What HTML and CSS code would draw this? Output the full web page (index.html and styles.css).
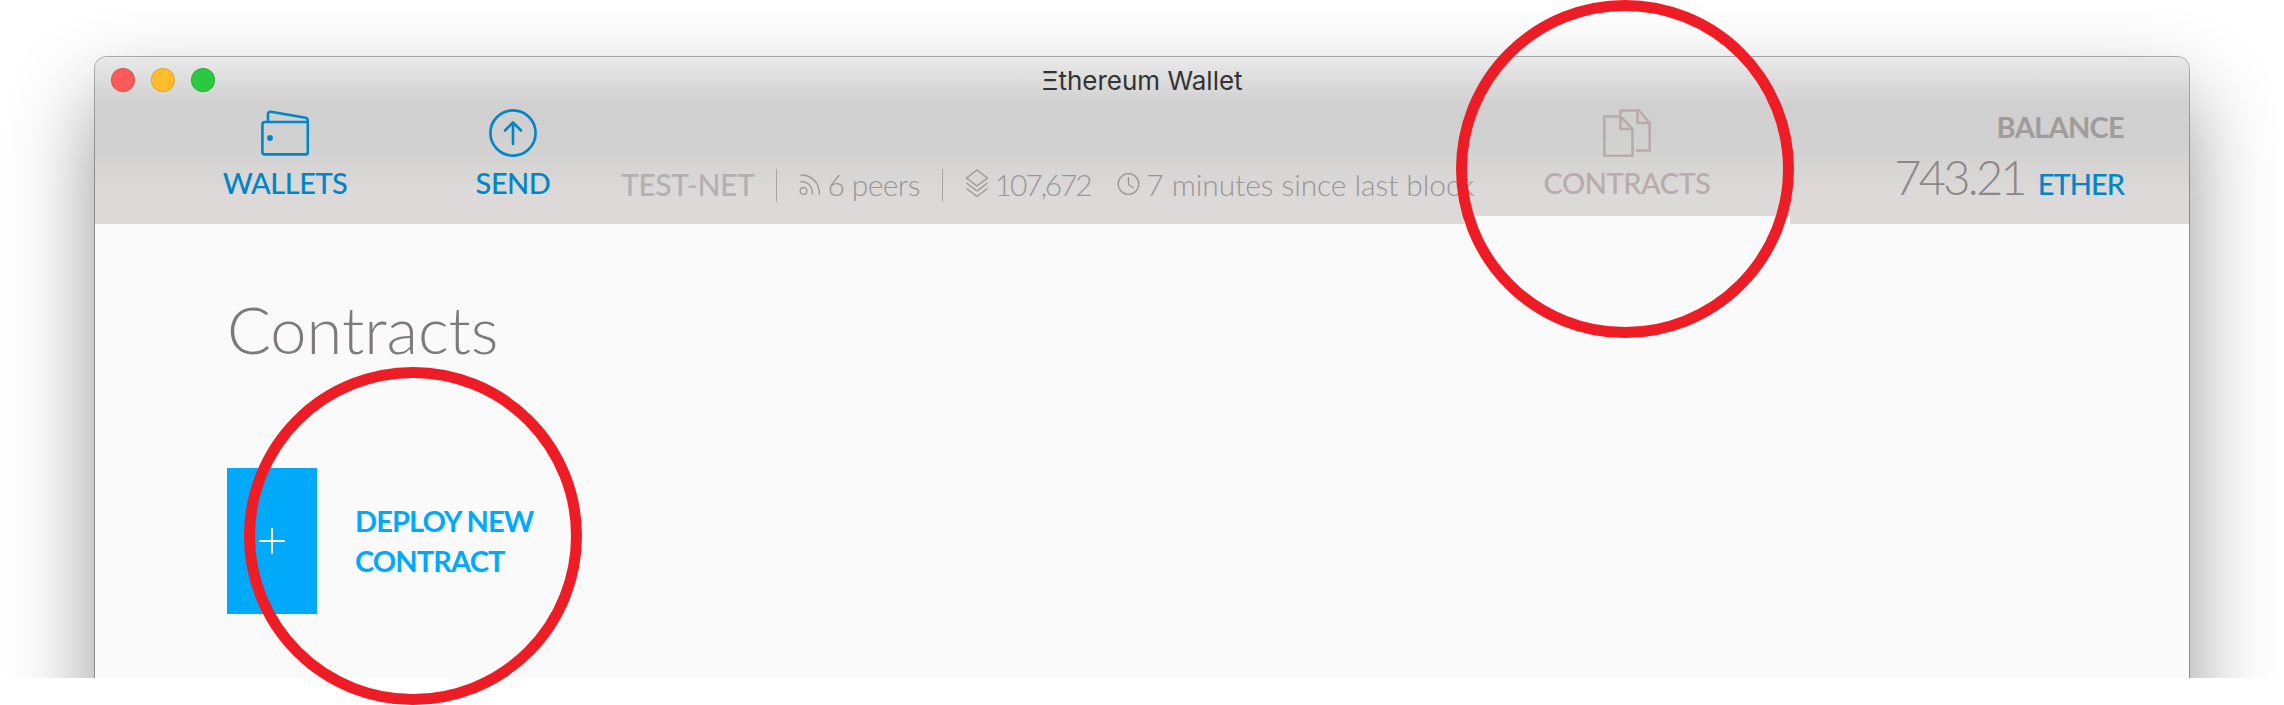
FILE: index.html
```html
<!DOCTYPE html>
<html lang="en">
<head>
    <meta charset="UTF-8">
    <title>Ethereum Wallet - Contracts</title>
    <link rel="stylesheet" href="styles.css">
</head>
<body>
    <div class="stage">
        <div class="window">
            <header class="chrome">
                <div class="titlebar">
                    <div class="lights">
                        <span class="light light-red"></span>
                        <span class="light light-yellow"></span>
                        <span class="light light-green"></span>
                    </div>
                    <div class="title">Ξthereum Wallet</div>
                </div>
                <nav class="nav">
                    <a class="tab">
                        <svg class="tab-icon" width="48" height="48" viewBox="0 0 48 48" fill="none" stroke="currentColor" stroke-width="2.6" stroke-linejoin="round">
                            <path d="M7 13V5.5C7 3.5 8.3 2.5 10 2.8L44.5 8.8C46 9.2 46.8 10 46.8 11.5V43C46.8 44.6 46 45.4 44.5 45.4H3.8C2.2 45.4 1.4 44.6 1.4 43V15.5C1.4 14 2.2 13 3.8 13H46"/>
                            <circle cx="9" cy="29" r="2.9" fill="currentColor" stroke="none"/>
                        </svg>
                        <span>WALLETS</span>
                    </a>
                    <a class="tab">
                        <svg class="tab-icon" width="48" height="48" viewBox="0 0 48 48" fill="none" stroke="currentColor" stroke-width="2.6" stroke-linecap="round" stroke-linejoin="round">
                            <circle cx="24" cy="24" r="22.6"/>
                            <path d="M24 35V14M16 21.5L24 13.5L32 21.5"/>
                        </svg>
                        <span>SEND</span>
                    </a>
                    <div class="status">
                        <span class="status-net">TEST-NET</span>
                        <span class="status-sep"></span>
                        <span class="status-item status-peers">
                            <svg width="22" height="24" viewBox="0 0 22 24" fill="none" stroke="currentColor" stroke-width="1.3">
                                <circle cx="4.5" cy="19" r="3.4"/>
                                <path d="M1.5 9.5C9 9.5 13.5 14 13.5 22.5M1.5 3C12.5 3 20.5 10.5 20.5 22.5"/>
                            </svg>
                            6 peers
                        </span>
                        <span class="status-sep"></span>
                        <span class="status-item status-count">
                            <svg width="24" height="32" viewBox="0 0 24 32" fill="none" stroke="currentColor" stroke-width="1.3" stroke-linejoin="round">
                                <path d="M12 2L22.5 10L12 18L1.5 10Z"/>
                                <path d="M1.5 15L12 23L22.5 15M1.5 20.5L12 28.5L22.5 20.5"/>
                            </svg>
                            107,672
                        </span>
                        <span class="status-item status-last">
                            <svg width="23" height="24" viewBox="0 0 23 24" fill="none" stroke="currentColor" stroke-width="1.3">
                                <circle cx="11.5" cy="12" r="10.3"/>
                                <path d="M11.5 5V12.5L16.5 16"/>
                            </svg>
                            7 minutes since last block
                        </span>
                    </div>
                    <a class="tab tab-active">
                        <svg class="tab-icon" width="48" height="48" viewBox="0 0 48 48" fill="none" stroke="currentColor" stroke-width="2.6" stroke-linejoin="round">
                            <path d="M17.5 6V1.5H36L46.7 14V41.5H33"/>
                            <path d="M34.5 1.5V14H46.7"/>
                            <path d="M1.3 7.5H17.5L29.5 20V46.7H1.3Z"/>
                            <path d="M17.5 7.5V20H29.5"/>
                        </svg>
                        <span>CONTRACTS</span>
                    </a>
                    <div class="balance">
                        <div class="balance-label">BALANCE</div>
                        <div class="balance-value"><span class="balance-amount">743.21</span><span class="balance-unit">ETHER</span></div>
                    </div>
                </nav>
            </header>
            <main class="content">
                <h1 class="page-title">Contracts</h1>
                <a class="deploy">
                    <span class="deploy-plus">
                        <svg width="26" height="26" viewBox="0 0 26 26" stroke="#fff" stroke-width="2">
                            <path d="M13 0V26M0 13H26"/>
                        </svg>
                    </span>
                    <span class="deploy-text">DEPLOY NEW<br>CONTRACT</span>
                </a>
            </main>
        </div>
    </div>

    <div class="ring ring-tab"></div>
    <div class="ring ring-deploy"></div>
</body>
</html>
```

FILE: styles.css
```css
html, body {
    margin: 0;
    height: 705px;
    overflow: hidden;
    background-color: #ffffff;
    font-family: 'Lato', 'Open Sans', sans-serif;
}
.stage {
    height: 678px;
    padding: 57px 95px 0;
    box-sizing: border-box;
    overflow: hidden;
}
.window {
    height: 700px;
    background-color: #fafafa;
    border-radius: 12px 12px 0 0;
    box-shadow: 0 0 0 1px rgba(0, 0, 0, 0.3), 0 40px 85px rgba(0, 0, 0, 0.42);
}
.chrome {
    height: 167px;
    border-radius: 12px 12px 0 0;
    background: linear-gradient(to bottom, #e9e9e9 0, #d0d0d0 48px, #d0d0d0 80px, #dcd9d8 135px);
}
.titlebar {
    display: grid;
    grid-template-columns: 1fr auto 1fr;
    align-items: center;
    height: 46px;
}
.lights {
    display: flex;
    gap: 16px;
    padding-left: 16px;
}
.light {
    width: 22px;
    height: 22px;
    border-radius: 50%;
    border: 1px solid rgba(0, 0, 0, 0.12);
}
.light-red { background-color: #fc5b57; }
.light-yellow { background-color: #ffbc2d; }
.light-green { background-color: #2ac940; }
.title {
    font-family: 'Inter', sans-serif;
    font-size: 26px;
    color: #333333;
}
.nav {
    display: flex;
    height: 121px;
    padding-left: 90px;
}
.tab {
    width: 200px;
    display: flex;
    flex-direction: column;
    align-items: center;
    padding-top: 6px;
    margin-right: 28px;
    color: #0085c7;
    font-size: 29px;
    font-weight: 500;
    letter-spacing: -0.5px;
    line-height: 36px;
}
.tab-icon {
    margin-bottom: 8px;
}
.tab-active {
    width: 326px;
    height: 121px;
    box-sizing: border-box;
    margin-right: 0;
    flex: none;
    color: #b9abab;
    border-bottom: 8px solid #fafafa;
}
.status {
    flex: none;
    width: 843px;
    margin-left: -20px;
    height: 99px;
    display: flex;
    align-items: flex-end;
    white-space: nowrap;
    color: #999696;
    font-size: 30px;
    font-weight: 300;
}
.status-net {
    color: #b3b0af;
    font-weight: 500;
    letter-spacing: -0.4px;
}
.status-sep {
    flex: none;
    width: 1px;
    height: 33px;
    margin: 0 22px;
    background-color: #a8a5a5;
}
.status-item {
    flex: none;
    display: flex;
    align-items: center;
    gap: 6px;
}
.status-peers {
    letter-spacing: -0.6px;
}
.status-count {
    letter-spacing: -2.2px;
}
.status-last {
    margin-left: 27px;
    letter-spacing: -0.1px;
}
.balance {
    margin-left: auto;
    padding-right: 65px;
    text-align: right;
}
.balance-label {
    margin-top: 6px;
    color: #a09c9b;
    font-size: 29px;
    font-weight: 700;
    letter-spacing: -0.7px;
    line-height: 36px;
}
.balance-value {
    margin-top: 4px;
    color: #8c8888;
    font-size: 47px;
    font-weight: 300;
    line-height: 56px;
}
.balance-amount {
    margin-right: 13px;
    letter-spacing: -2.8px;
}
.balance-unit {
    color: #0085c7;
    font-size: 29px;
    font-weight: 500;
    letter-spacing: -1px;
}
.content {
    padding: 65px 0 0 132px;
}
.page-title {
    margin: 0;
    color: #7f7a7a;
    font-size: 65px;
    font-weight: 300;
    line-height: 80px;
}
.deploy {
    display: flex;
    align-items: center;
    gap: 38px;
    margin-top: 99px;
}
.deploy-plus {
    width: 90px;
    height: 146px;
    display: flex;
    align-items: center;
    justify-content: center;
    background-color: #00a9fa;
}
.deploy-text {
    color: #00a9fa;
    font-size: 29px;
    font-weight: 700;
    letter-spacing: -0.9px;
    line-height: 40px;
}
/* red annotation circles over the screenshot */
.ring {
    position: absolute;
    width: 338px;
    height: 338px;
    box-sizing: border-box;
    border: 11px solid #ee1c25;
    border-radius: 50%;
}
.ring-tab {
    left: 1456px;
    top: 0;
}
.ring-deploy {
    left: 244px;
    top: 367px;
}
```
